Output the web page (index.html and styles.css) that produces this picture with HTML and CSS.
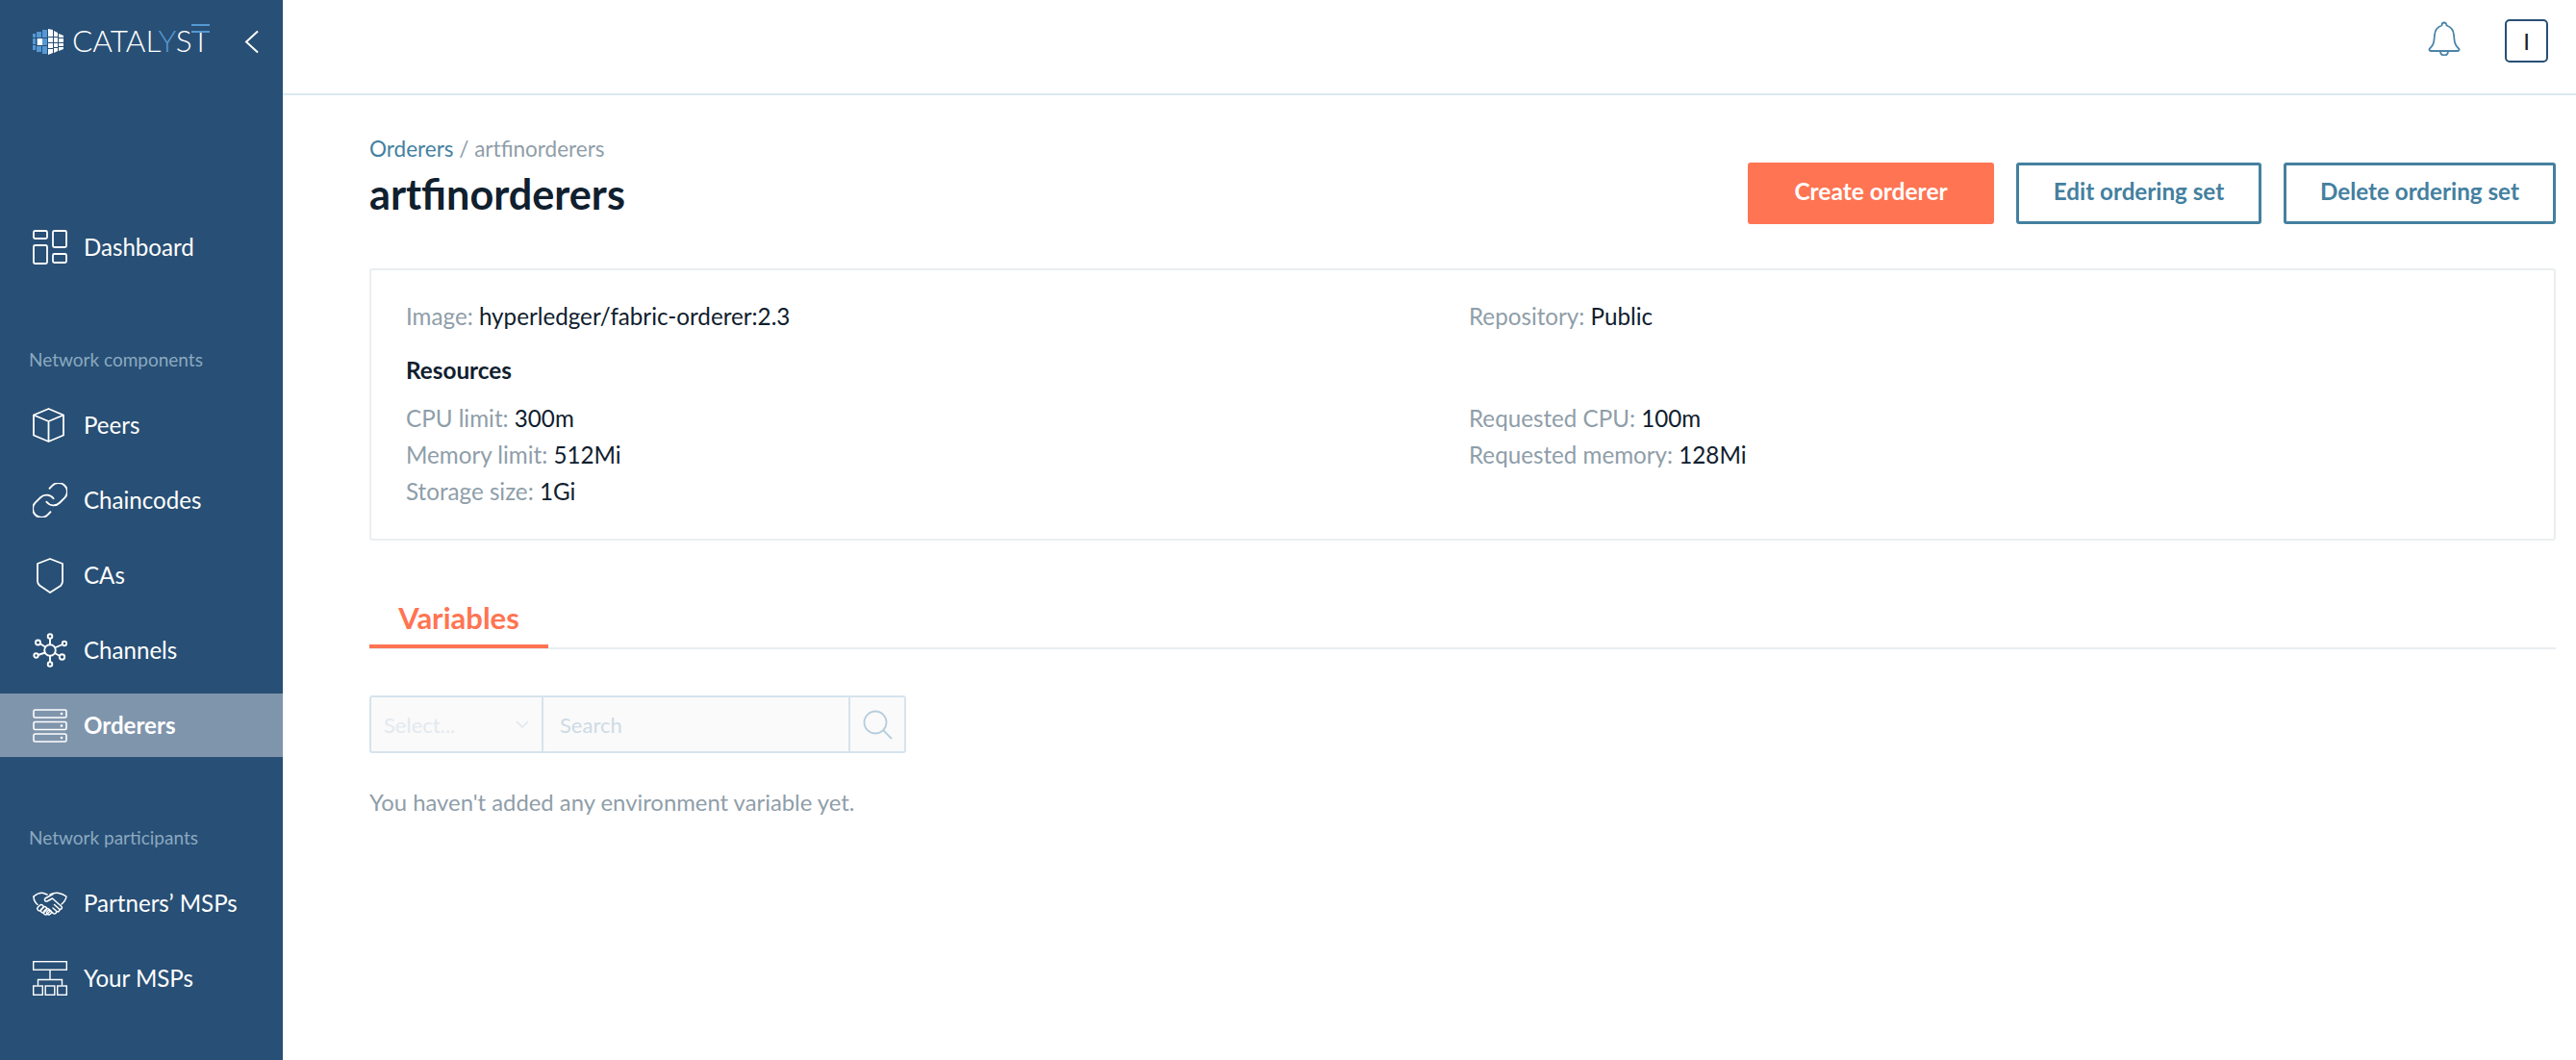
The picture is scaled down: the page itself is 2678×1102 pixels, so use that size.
FILE: index.html
```html
<!DOCTYPE html>
<html lang="en">
<head>
<meta charset="utf-8">
<title>artfinorderers</title>
<link rel="stylesheet" href="styles.css">
</head>
<body>
<div class="app">
  <aside class="sidebar">
    <div class="brand">
      <svg class="brand-mark" width="32" height="27" viewBox="0 0 32 27">
        <g fill="#5598d3">
          <path d="M0 5h3v4H0zM0 10h3v6H0zM0 17h3v5H0zM4 3h5v6H4zM4 18h5v6H4zM4 10h1v7H4zM10 1h5v8h-5zM10 10h5v7h-5zM10 18h5v8h-5z"/>
        </g>
        <rect x="5" y="10" width="5" height="7" fill="#fff"/>
        <g fill="#fff">
          <path d="M16 0l5 1v7h-5zM16 9h5v5h-5zM16 15h5v5h-5zM16 21h5v4l-5 2zM22 2l4 2v4h-4zM22 9h4v5h-4zM22 15h4v4h-4zM22 20h4v3l-4 2zM27 5l5 2v2h-5zM27 10h5v4h-5zM27 15h5v3h-5zM27 19h5v2l-5 2z"/>
        </g>
      </svg>
      <span class="brand-name">CATAL<span class="brand-y">Y</span>S<span class="brand-t">T</span></span>
      <svg class="collapse" width="16" height="25" viewBox="0 0 16 25"><path d="M14 1.500L2 12.500l12 11" fill="none" stroke="#fff" stroke-width="2"/></svg>
    </div>
    <nav class="nav">
      <a class="nav-item">
        <svg class="nav-icon" width="36" height="36" viewBox="0 0 36 36"><g fill="none" stroke="#fff" stroke-width="1.800"><rect x="1" y="1" width="14" height="8" rx="1.500"/><rect x="21" y="1" width="14" height="17" rx="1.500"/><rect x="1" y="16" width="14" height="19" rx="1.500"/><rect x="21" y="25" width="14" height="9" rx="1.500"/></g></svg>
        <span>Dashboard</span>
      </a>
      <div class="nav-label">Network components</div>
      <a class="nav-item">
        <svg class="nav-icon" width="36" height="36" viewBox="0 0 36 36"><g fill="none" stroke="#fff" stroke-width="1.800" stroke-linejoin="round"><path d="M16.500 1L32 7.500v21L16.500 35 1 28.500v-21z"/><path d="M1 7.500L16.500 14 32 7.500M16.500 14v21"/></g></svg>
        <span>Peers</span>
      </a>
      <a class="nav-item">
        <svg class="nav-icon" width="36" height="36" viewBox="2 2 20 20"><g fill="none" stroke="#fff" stroke-width="1.050" stroke-linecap="round" stroke-linejoin="round"><path d="M10 13a5 5 0 0 0 7.540.540l3-3a5 5 0 0 0-7.070-7.070l-1.720 1.710"/><path d="M14 11a5 5 0 0 0-7.540-.540l-3 3a5 5 0 0 0 7.070 7.070l1.710-1.710"/></g></svg>
        <span>Chaincodes</span>
      </a>
      <a class="nav-item">
        <svg class="nav-icon nav-icon-shield" width="28" height="37" viewBox="0 0 28 37"><path d="M14 1l13 5v18.500c0 2-1 3-2 4.500l-11 7-11-7.500c-1-1-2-2.500-2-4.500V6z" fill="none" stroke="#fff" stroke-width="1.800" stroke-linejoin="round"/></svg>
        <span>CAs</span>
      </a>
      <a class="nav-item">
        <svg class="nav-icon" width="36" height="36" viewBox="0 0 36 36"><g fill="none" stroke="#fff" stroke-width="1.900"><circle cx="18" cy="18" r="5.800"/><circle cx="18" cy="3.500" r="2.300"/><circle cx="18" cy="32.500" r="2.300"/><circle cx="5.500" cy="10" r="2.500"/><circle cx="33" cy="11" r="2.200"/><circle cx="3.500" cy="23.500" r="2.200"/><circle cx="30.500" cy="25" r="2.700"/><path d="M18 6v6.500M18 23.500V30M7.800 11.200l5.700 3.500M31 12l-8.200 3.500M5.500 23l7.500-2.500M28.300 24l-5.500-3"/></g></svg>
        <span>Channels</span>
      </a>
      <a class="nav-item is-active">
        <svg class="nav-icon" width="36" height="35" viewBox="0 0 36 35"><g fill="none" stroke="#fff" stroke-width="1.600"><rect x="1" y="1" width="34" height="8" rx="1.500"/><rect x="1" y="13.500" width="34" height="8" rx="1.500"/><rect x="1" y="26" width="34" height="8" rx="1.500"/></g><g fill="#fff"><circle cx="30" cy="5" r="1.300"/><circle cx="30" cy="17.500" r="1.300"/><circle cx="30" cy="30" r="1.300"/></g></svg>
        <span>Orderers</span>
      </a>
      <div class="nav-label">Network participants</div>
      <a class="nav-item">
        <svg class="nav-icon" width="36" height="25" viewBox="0 0 36 25"><g fill="none" stroke="#fff" stroke-width="1.500" stroke-linejoin="round" stroke-linecap="round"><path d="M1 5c3-2.500 7-4 10-3.500l4 1.500M18 3c3-1.500 6-2 9-1.500 3 .5 6 2 8 3.500-.5 3-2.500 6-5 8"/><path d="M1 5c0 3 1 6 4 8.500"/><path d="M21 2.500l-8 4.500c-1.500 1.500 0 3.500 2 3l5.500-3 9.500 8.500c1.500 2-1 3.500-2.500 2.500l-5-4.500M27.500 18c1 2-1 3.500-2.500 2.500l-4-3.500M24.500 20.500c.5 2-1.500 3-3 2.200l-2.500-2"/></g><g fill="none" stroke="#fff" stroke-width="1.400"><rect x="4.500" y="14.500" width="7" height="4.400" rx="2.200" transform="rotate(-45 8 16.700)"/><rect x="8" y="16.500" width="7" height="4.400" rx="2.200" transform="rotate(-45 11.500 18.700)"/><rect x="11" y="18.500" width="7" height="4.400" rx="2.200" transform="rotate(-45 14.500 20.700)"/><rect x="14.500" y="19.500" width="5" height="4.200" rx="2.100" transform="rotate(-45 17 21.600)"/></g></svg>
        <span>Partners’ MSPs</span>
      </a>
      <a class="nav-item">
        <svg class="nav-icon" width="36" height="36" viewBox="0 0 36 36"><g fill="none" stroke="#fff" stroke-width="1.400"><rect x=".700" y=".700" width="34.600" height="8.500"/><path d="M18 9v10M5.500 25.500v-6h25v6"/><rect x=".700" y="26" width="9.600" height="9.300"/><rect x="13.200" y="26" width="9.600" height="9.300"/><rect x="25.700" y="26" width="9.600" height="9.300"/></g></svg>
        <span>Your MSPs</span>
      </a>
    </nav>
  </aside>
  <div class="main">
    <header class="topbar">
      <svg class="bell" width="34" height="36" viewBox="0 0 34 36"><g fill="none" stroke="#4a84a9" stroke-width="1.800" stroke-linejoin="round"><path d="M17 1.500c-1.500 0-2.500 1-2.500 3C10 6 7.500 9 7 14c-.5 6-.5 11-5 14.500-1 1-.5 2.500 1 2.500h28c1.500 0 2-1.500 1-2.500-4.500-3.500-4.500-8.500-5-14.500-.5-5-3-8-7.500-9.500 0-2-1-3-2.500-3z"/><path d="M13 31c0 3 2 4.500 4 4.500s4-1.500 4-4.500"/></g></svg>
      <div class="avatar">I</div>
    </header>
    <main class="content">
      <div class="page-head">
        <div>
          <div class="crumbs"><a class="crumb-link">Orderers</a> / artfinorderers</div>
          <h1 class="title">artfinorderers</h1>
        </div>
        <div class="actions">
          <button class="btn btn-primary">Create orderer</button>
          <button class="btn btn-edit">Edit ordering set</button>
          <button class="btn btn-delete">Delete ordering set</button>
        </div>
      </div>
      <section class="card">
        <div class="card-grid">
          <div><span class="key">Image:</span> hyperledger/fabric-orderer:2.3</div>
          <div><span class="key">Repository:</span> Public</div>
        </div>
        <h2 class="card-title">Resources</h2>
        <div class="card-grid">
          <div>
            <div><span class="key">CPU limit:</span> 300m</div>
            <div><span class="key">Memory limit:</span> 512Mi</div>
            <div><span class="key">Storage size:</span> 1Gi</div>
          </div>
          <div>
            <div><span class="key">Requested CPU:</span> 100m</div>
            <div><span class="key">Requested memory:</span> 128Mi</div>
          </div>
        </div>
      </section>
      <div class="tabs"><div class="tab">Variables</div></div>
      <div class="filter">
        <div class="filter-select">
          <span>Select...</span>
          <svg width="14" height="8" viewBox="0 0 14 8"><path d="M1 1l6 6 6-6" fill="none" stroke="#dfe7ee" stroke-width="1.500"/></svg>
        </div>
        <div class="filter-search">Search</div>
        <div class="filter-btn">
          <svg width="31" height="31" viewBox="0 0 31 31"><g fill="none" stroke="#b5cddd" stroke-width="1.800"><circle cx="13" cy="13" r="11.500"/><path d="M21 21l9 9"/></g></svg>
        </div>
      </div>
      <p class="empty">You haven't added any environment variable yet.</p>
    </main>
  </div>
</div>
</body>
</html>
```

FILE: styles.css
```css
* { box-sizing: border-box; }
html, body { height: 100%; }
body {
  margin: 0;
  background: #fff;
  font-family: Lato, "Open Sans", sans-serif;
  font-size: 24px;
  color: #10202e;
}
.app { display: flex; min-height: 1102px; height: 1102px; overflow: hidden; }

.sidebar { flex: 0 0 294px; background: #284f75; color: #fff; }
.brand { display: flex; align-items: center; height: 86px; padding: 0 24px 0 34px; }
.brand-mark { flex: none; margin-right: 9px; }
.brand-name {
  position: relative;
  font-size: 31.500px;
  font-weight: 300;
  line-height: 1;
}
.brand-y { color: #5598d3; }
.brand-t { position: relative; }
.brand-t::before {
  content: "";
  position: absolute;
  left: 0; right: 0; top: 2px;
  height: 5px;
  border-top: 2px solid #5598d3;
  border-bottom: 2px solid #5598d3;
}
.collapse { margin-left: auto; }

.nav { display: flex; flex-direction: column; gap: 12px; padding-top: 138px; }
.nav-item { display: flex; align-items: center; height: 66px; padding-left: 34px; color: #fff; font-size: 24.100px; }
.nav-item > span { margin: 0 0 2px 17px; }
.nav-icon { flex: none; }
.nav-icon-shield { margin: 0 4px 0 4px; }
.is-active { background: #7f95ac; font-weight: 700; }
.nav-label {
  height: 24px;
  margin: 60px 0 11px;
  padding-left: 30px;
  font-size: 19px;
  line-height: 24px;
  color: #8aa9c0;
}

.main { flex: 1; min-width: 0; }
.topbar {
  display: flex;
  align-items: center;
  justify-content: flex-end;
  height: 99px;
  padding: 0 29px 13px 0;
  border-bottom: 2px solid #d9eaf3;
}
.bell { margin: 0 46px 4px 0; }
.avatar {
  display: flex;
  align-items: center;
  justify-content: center;
  width: 45px;
  height: 45px;
  border: 2px solid #284f75;
  border-radius: 5px;
  font-size: 24px;
  color: #222;
}

.content { padding: 41px 21px 0 90px; }
.page-head { display: flex; justify-content: space-between; align-items: flex-start; height: 139px; }
.crumbs { font-size: 22.500px; line-height: 30px; color: #8f9ea9; }
.crumb-link { color: #44809f; }
.title { margin: 7px 0 0; font-size: 43.200px; font-weight: 700; line-height: 48px; color: #10202e; }
.actions { display: flex; gap: 23px; margin-top: 29px; }
.btn {
  height: 64px;
  border-radius: 3px;
  font-family: inherit;
  font-size: 24.200px;
  font-weight: 700;
  padding: 0 0 5px;
  background: #fff;
  color: #44809f;
  border: 3px solid #44809f;
}
.btn-primary { width: 256px; background: #ff7452; color: #fff; border: 0; font-size: 24.500px; }
.btn-edit { width: 255px; }
.btn-delete { width: 283px; }

.card {
  height: 283px;
  padding: 29px 36px 0 36px;
  border: 2px solid #ebeef0;
  border-radius: 3px;
  font-size: 24.200px;
  line-height: 38px;
  color: #10202e;
}
.card-grid { display: grid; grid-template-columns: 1105px 1fr; }
.key { color: #8f9ea9; }
.card-title { margin: 18px 0 12px; font-size: 24.300px; font-weight: 700; line-height: 38px; }

.tabs { height: 113px; display: flex; align-items: flex-end; border-bottom: 2px solid #e9eef1; margin-bottom: 48px; }
.tab {
  width: 186px;
  margin-bottom: -1px;
  padding-bottom: 10px;
  text-align: center;
  font-size: 31px;
  font-weight: 700;
  line-height: 36px;
  color: #ff7452;
  border-bottom: 4px solid #ff7452;
  border-radius: 3px 3px 0 0;
}

.filter {
  display: flex;
  width: 558px;
  height: 60px;
  background: #fafafa;
  border: 2px solid #d6e4ed;
  border-radius: 3px;
}
.filter-select {
  display: flex;
  align-items: center;
  justify-content: space-between;
  width: 177px;
  padding: 0 13px;
  font-size: 22px;
  color: #e3e9ef;
}
.filter-search {
  display: flex;
  align-items: center;
  width: 321px;
  padding-left: 17px;
  border-left: 2px solid #d6e4ed;
  border-right: 2px solid #d6e4ed;
  font-size: 22px;
  color: #cddbe6;
}
.filter-btn { flex: 1; display: flex; align-items: center; justify-content: center; }
.empty { margin: 34px 0 0; font-size: 23.850px; line-height: 34px; color: #8f9ea9; }
```
